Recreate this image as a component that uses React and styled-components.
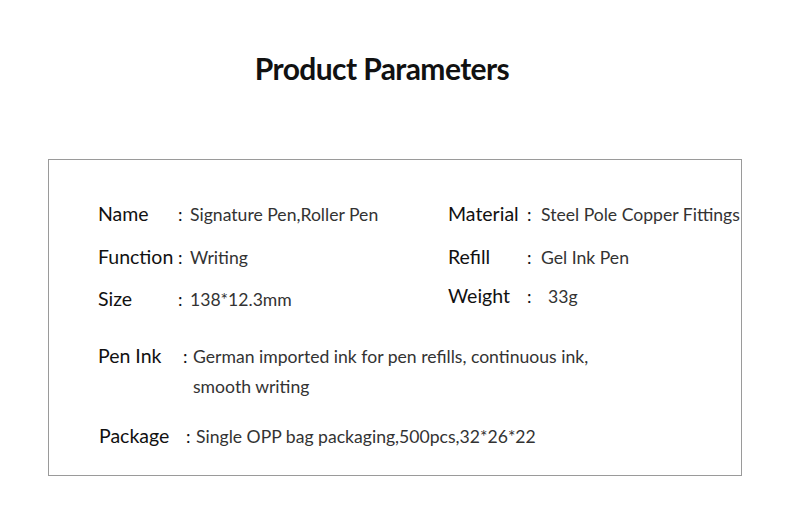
import React from "react";
import styled, { createGlobalStyle } from "styled-components";

const Global = createGlobalStyle`
  html, body { margin: 0; padding: 0; background: #fff; }
  body { font-family: Lato, "Open Sans", sans-serif; color: #111; }
`;

const Page = styled.div`
  width: 790px;
  height: 508px;
  padding-top: 50px;
  box-sizing: border-box;
`;

const Title = styled.h1`
  margin: 0;
  padding-right: 26px;
  text-align: center;
  font-size: 30px;
  line-height: 36px;
  font-weight: 700;
  letter-spacing: -0.6px;
  color: #111;
`;

const Box = styled.div`
  margin: 73px 0 0 48px;
  width: 694px;
  height: 317px;
  box-sizing: border-box;
  border: 1px solid #9a9a9a;
  padding: 40px 0 0 49px;
`;

const Columns = styled.div`
  display: grid;
  grid-template-columns: 350px 1fr;
`;

const Column = styled.div`
  display: flex;
  flex-direction: column;
`;

const Row = styled.div`
  display: flex;
  align-items: baseline;
  height: ${(p) => p.$h || 42}px;
  margin-left: ${(p) => p.$indent || 0}px;
`;

const Label = styled.span`
  width: ${(p) => p.$w}px;
  flex: none;
  font-size: 19.5px;
  color: #111;
`;

const Colon = styled.span`
  width: ${(p) => p.$w}px;
  flex: none;
  font-size: 18px;
  color: #111;
`;

const Value = styled.span`
  font-size: 17.6px;
  line-height: 30px;
  color: #333;
  white-space: pre-line;
`;

const left = [
  ["Name", "Signature Pen,Roller Pen", 43],
  ["Function", "Writing", 42],
  ["Size", "138*12.3mm", 42],
];
const right = [
  ["Material", "Steel Pole Copper Fittings", 0, 43],
  ["Refill", "Gel Ink Pen", 0, 39],
  ["Weight", "33g", 7, 42],
];

export default function App() {
  return (
    <>
      <Global />
      <Page>
        <Title>Product Parameters</Title>
        <Box>
          <Columns>
            <Column>
              {left.map(([l, v, h]) => (
                <Row key={l} $h={h}>
                  <Label $w={80}>{l}</Label>
                  <Colon $w={12}>:</Colon>
                  <Value>{v}</Value>
                </Row>
              ))}
            </Column>
            <Column>
              {right.map(([l, v, pad, h]) => (
                <Row key={l} $h={h}>
                  <Label $w={79}>{l}</Label>
                  <Colon $w={14 + pad}>:</Colon>
                  <Value>{v}</Value>
                </Row>
              ))}
            </Column>
          </Columns>
          <Row $h={80} style={{ marginTop: 15 }}>
            <Label $w={85}>Pen Ink</Label>
            <Colon $w={10}>:</Colon>
            <Value>
              {"German imported ink for pen refills, continuous ink,\nsmooth writing"}
            </Value>
          </Row>
          <Row $h={40} $indent={1}>
            <Label $w={87}>Package</Label>
            <Colon $w={10}>:</Colon>
            <Value>Single OPP bag packaging,500pcs,32*26*22</Value>
          </Row>
        </Box>
      </Page>
    </>
  );
}
